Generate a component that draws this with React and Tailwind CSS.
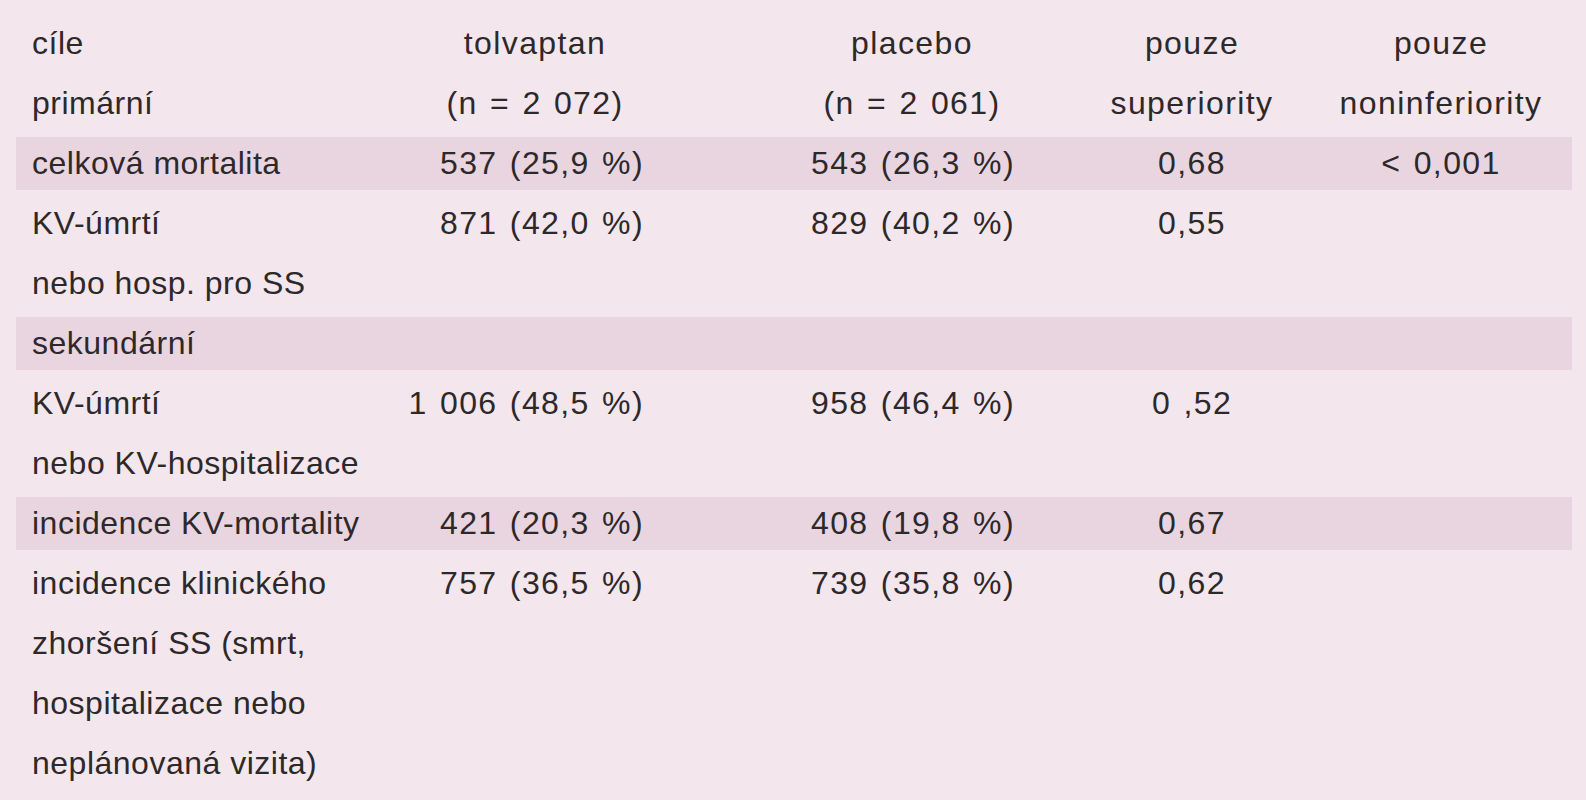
const cols =
  "grid grid-cols-[384px_270px_430px_184px_288px]";

const rows = [
  {
    hi: true,
    label: ["celková mortalita"],
    a: "537 (25,9 %)",
    b: "543 (26,3 %)",
    c: "0,68",
    d: "< 0,001",
  },
  {
    label: ["KV-úmrtí", "nebo hosp. pro SS"],
    a: "871 (42,0 %)",
    b: "829 (40,2 %)",
    c: "0,55",
  },
  { hi: true, label: ["sekundární"] },
  {
    label: ["KV-úmrtí", "nebo KV-hospitalizace"],
    a: "1 006 (48,5 %)",
    b: "958 (46,4 %)",
    c: "0 ,52",
  },
  {
    hi: true,
    label: ["incidence KV-mortality"],
    a: "421 (20,3 %)",
    b: "408 (19,8 %)",
    c: "0,67",
  },
  {
    label: [
      "incidence klinického",
      "zhoršení SS (smrt,",
      "hospitalizace nebo",
      "neplánovaná vizita)",
    ],
    a: "757 (36,5 %)",
    b: "739 (35,8 %)",
    c: "0,62",
  },
];

// numeric / header cells are set wider than the label column
const num = "whitespace-nowrap tracking-[1.4px] [word-spacing:2px]";

const Row = ({ row }) => {
  const band = row.hi
    ? "my-[3.5px] bg-[#e9d5e0] leading-[53px]"
    : "leading-[60px]";
  return (
    <div className={`${cols} ${band}`}>
      <div className="pl-4 whitespace-nowrap tracking-[0.5px]">
        {row.label.map((l, i) => (
          <div key={i}>{l}</div>
        ))}
      </div>
      <div className={`text-right pr-[26px] ${num}`}>{row.a}</div>
      <div className={`text-right pr-[85px] ${num}`}>{row.b}</div>
      <div className={`text-center ${num}`}>{row.c}</div>
      <div className={`text-center pl-[26px] ${num}`}>{row.d}</div>
    </div>
  );
};

const App = () => {
  return (
    <div
      className="min-h-[800px] w-[1586px] bg-[#f3e7ed] pl-4 pr-[14px] pt-[13px] text-[32px] text-[#2d292b]"
      style={{ fontFamily: '"Liberation Sans", Arial, sans-serif' }}
    >
      <div className={`${cols} leading-[60px]`}>
        <div className="pl-4 tracking-[0.5px]">
          <div>cíle</div>
          <div>primární</div>
        </div>
        <div className={`text-center ${num}`}>
          <div>tolvaptan</div>
          <div>(n = 2 072)</div>
        </div>
        <div className={`text-center pl-[54px] ${num}`}>
          <div>placebo</div>
          <div>(n = 2 061)</div>
        </div>
        <div className={`text-center ${num}`}>
          <div>pouze</div>
          <div>superiority</div>
        </div>
        <div className={`text-center pl-[26px] ${num}`}>
          <div>pouze</div>
          <div>noninferiority</div>
        </div>
      </div>
      {rows.map((r, i) => (
        <Row key={i} row={r} />
      ))}
    </div>
  );
};

export default App;
